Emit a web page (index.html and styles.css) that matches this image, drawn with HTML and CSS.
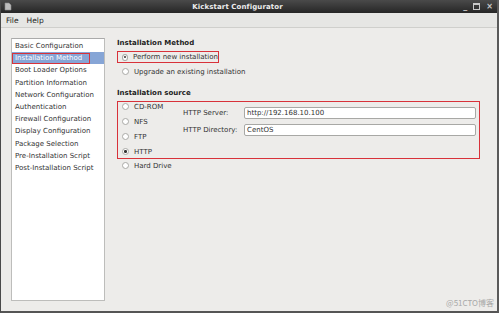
FILE: index.html
```html
<!DOCTYPE html>
<html>
<head>
    <title>Kickstart Configurator</title>
    <link rel="stylesheet" href="styles.css">
</head>
<body>
    <div class="window">
        <div class="titlebar">
            <svg class="app-icon" width="8" height="9" viewBox="0 0 8 9">
                <path d="M1 1h4l2 2v5H1z" fill="#bdbdbd" stroke="#8a8a8a" stroke-width="0.6"/>
            </svg>
            <span class="title">Kickstart Configurator</span>
            <div class="win-buttons">
                <span class="wbtn">_</span>
                <span class="wbtn box"></span>
                <span class="wbtn">×</span>
            </div>
        </div>
        <div class="menubar">
            <span class="menu">File</span>
            <span class="menu">Help</span>
        </div>

        <div class="main">
            <div class="sidebar">
                <div class="side-item">Basic Configuration</div>
                <div class="side-item selected"><span class="mark">Installation Method</span></div>
                <div class="side-item">Boot Loader Options</div>
                <div class="side-item">Partition Information</div>
                <div class="side-item">Network Configuration</div>
                <div class="side-item">Authentication</div>
                <div class="side-item">Firewall Configuration</div>
                <div class="side-item">Display Configuration</div>
                <div class="side-item">Package Selection</div>
                <div class="side-item">Pre-Installation Script</div>
                <div class="side-item">Post-Installation Script</div>
            </div>

            <div class="content">
                <div class="section-title">Installation Method</div>
                <div class="radio-list">
                    <div class="radio-row mark-box"><span class="radio checked"></span>Perform new installation</div>
                    <div class="radio-row"><span class="radio"></span>Upgrade an existing installation</div>
                </div>

                <div class="section-title source-title">Installation source</div>
                <div class="source-box">
                    <div class="source-radios">
                        <div class="radio-row src"><span class="radio"></span>CD-ROM</div>
                        <div class="radio-row src"><span class="radio"></span>NFS</div>
                        <div class="radio-row src"><span class="radio"></span>FTP</div>
                        <div class="radio-row src"><span class="radio checked"></span>HTTP</div>
                    </div>
                    <div class="fields">
                        <label class="field-label">HTTP Server:</label>
                        <div class="input">http://192.168.10.100</div>
                        <label class="field-label">HTTP Directory:</label>
                        <div class="input">CentOS</div>
                    </div>
                </div>
                <div class="radio-row hard"><span class="radio"></span>Hard Drive</div>
            </div>
        </div>
        <div class="watermark">@51CTO博客</div>
    </div>
</body>
</html>
```

FILE: styles.css
```css
body {
    margin: 0;
    font-family: "DejaVu Sans", sans-serif;
    font-size: 7px;
    color: #2e2e2e;
}
.window {
    width: 499px;
    height: 313px;
    box-sizing: border-box;
    background-color: #edecea;
    border-left: 1px solid #4a4a4a;
    border-right: 2px solid #5a5a5a;
    border-bottom: 2px solid #555;
    display: flex;
    flex-direction: column;
    position: relative;
}
.titlebar {
    height: 13px;
    background: linear-gradient(#4a4a4a, #262626);
    display: flex;
    align-items: center;
    position: relative;
    padding: 0 4px 0 3px;
}
.app-icon {
    display: block;
}
.title {
    position: absolute;
    left: 0;
    right: 23px;
    text-align: center;
    color: #ececec;
    font-weight: bold;
    font-size: 7px;
    letter-spacing: 0.1px;
}
.win-buttons {
    margin-left: auto;
    display: flex;
    gap: 6px;
    align-items: center;
    color: #c8c8c8;
    font-size: 8px;
    font-weight: bold;
}
.wbtn.box {
    width: 5px;
    height: 4px;
    border: 1px solid #c8c8c8;
    border-top-width: 2px;
}
.menubar {
    height: 14px;
    background-color: #e6e6e4;
    border-bottom: 1px solid #cfcfcc;
    display: flex;
    align-items: center;
    padding-left: 5px;
    gap: 8px;
    font-size: 7.5px;
    color: #222;
}
.main {
    flex: 1;
    display: flex;
    padding: 10px 0 10px 10px;
}
.sidebar {
    width: 94px;
    box-sizing: border-box;
    background-color: #fff;
    border: 1px solid #bdbdbb;
    border-top-color: #aaa;
    padding-top: 1px;
}
.side-item {
    height: 12.2px;
    line-height: 12.2px;
    padding-left: 3px;
    white-space: nowrap;
    color: #333;
}
.side-item.selected {
    background-color: #86a5d6;
    color: #fff;
    padding-left: 0;
}
.side-item .mark {
    display: inline-block;
    height: 11px;
    line-height: 9px;
    padding: 0 2px 0 2px;
    border: 1.5px solid #d8323a;
    box-sizing: border-box;
    width: 78px;
}
.content {
    margin-left: 12px;
    flex: 1;
    padding-right: 16px;
}
.section-title {
    font-weight: bold;
    color: #222;
    height: 11px;
    line-height: 11px;
}
.radio-list {
    margin-top: 2px;
}
.radio-row {
    display: flex;
    align-items: center;
    height: 13px;
    padding-left: 5px;
    color: #333;
    white-space: nowrap;
}
.radio {
    width: 5px;
    height: 5px;
    border: 1px solid #a9a9a6;
    border-radius: 50%;
    background: #fff;
    margin-right: 5px;
    display: flex;
    align-items: center;
    justify-content: center;
}
.radio.checked::after {
    content: "";
    width: 2.5px;
    height: 2.5px;
    border-radius: 50%;
    background: #333;
}
.mark-box {
    width: 102px;
    height: 12px;
    box-sizing: border-box;
    border: 1.5px solid #d8323a;
    padding-left: 4px;
    margin-bottom: 2px;
    margin-top: 1px;
}
.source-title {
    margin-top: 10px;
}
.source-box {
    margin-top: 2px;
    border: 1.5px solid #d8323a;
    height: 58px;
    box-sizing: border-box;
    display: flex;
    width: 363px;
}
.source-radios {
    width: 65px;
    margin-top: -3px;
}
.radio-row.src {
    height: 15px;
    padding-left: 4px;
}
.fields {
    display: grid;
    grid-template-columns: 61px 1fr;
    row-gap: 5px;
    align-items: center;
    margin-top: 5px;
    margin-right: 3px;
    flex: 1;
    align-content: start;
}
.field-label {
    color: #333;
}
.input {
    height: 12px;
    box-sizing: border-box;
    border: 1px solid #a8a8a5;
    border-radius: 2px;
    background: #fff;
    padding-left: 2px;
    line-height: 10px;
    color: #333;
}
.radio-row.hard {
    margin-top: 0;
    height: 13px;
}
.watermark {
    position: absolute;
    right: 3px;
    bottom: 3px;
    font-family: "Noto Sans CJK SC", sans-serif;
    font-size: 8px;
    color: #a8a8a8;
}
```
